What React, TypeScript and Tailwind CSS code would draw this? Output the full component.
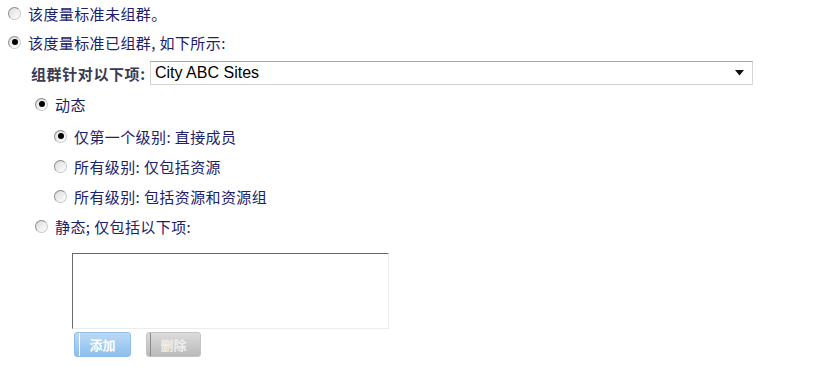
const font = "font-['Noto_Sans_CJK_SC','Liberation_Sans',sans-serif]";

function Radio({ checked }: { checked?: boolean }) {
  return (
    <span className="relative flex h-[13px] w-[13px] shrink-0 items-center justify-center rounded-full border border-[#c8c8c8] border-l-[#8c8c8c] border-t-[#8c8c8c] bg-gradient-to-br from-[#dcdcdc] to-white">
      {checked && <span className="h-[6px] w-[6px] rounded-full bg-black" />}
    </span>
  );
}

function Row({ checked, label, h, indent }: { checked?: boolean; label: string; h: string; indent: string }) {
  return (
    <div className={`flex items-center ${h} ${indent}`}>
      <Radio checked={checked} />
      <span className="ml-[7px] text-[15px] leading-none tracking-[0.4px] text-[#20206a]">{label}</span>
    </div>
  );
}

export default function App() {
  return (
    <div className={`h-[371px] w-[821px] bg-white ${font}`}>
      <div className="flex flex-col pl-[8px]">
        <Row label="该度量标准未组群。" h="h-[26px]" indent="" />
        <Row checked label="该度量标准已组群, 如下所示:" h="h-[32px]" indent="" />
        <div className="flex h-[30px] items-center pl-[23px]">
          <span className="w-[119px] text-[15px] font-bold leading-none tracking-[0.6px] text-[#3a3a50]">组群针对以下项:</span>
          <div className="flex h-[24px] w-[603px] items-center justify-between border border-[#d4d4d4] border-t-[#a8a8a8] bg-white pl-[4px] pr-[8px]">
            <span className="font-['Liberation_Sans',sans-serif] text-[16px] text-black">City ABC Sites</span>
            <svg width="9" height="6" viewBox="0 0 9 6">
              <path d="M0 0H9L4.5 5.5Z" fill="#111" />
            </svg>
          </div>
        </div>
        <Row checked label="动态" h="h-[32px]" indent="pl-[27px]" />
        <Row checked label="仅第一个级别: 直接成员" h="h-[32px]" indent="pl-[46px]" />
        <Row label="所有级别: 仅包括资源" h="h-[28px]" indent="pl-[46px]" />
        <Row label="所有级别: 包括资源和资源组" h="h-[32px]" indent="pl-[46px]" />
        <Row label="静态; 仅包括以下项:" h="h-[28px]" indent="pl-[27px]" />
        <div className="ml-[64px] mt-[13px] h-[76px] w-[317px] border border-[#ececec] border-l-[#6a6a6a] border-t-[#6a6a6a] bg-white" />
        <div className="ml-[66px] mt-[3px] flex gap-[15px]">
          <button className="relative flex h-[25px] w-[57px] items-center justify-center rounded-[3px] border border-[#8fbfe8] bg-gradient-to-b from-[#b9daf6] to-[#8bbfed] text-[13px] font-bold text-white">
            <span className="absolute left-[4px] top-0 h-full w-px bg-white" />
            添加
          </button>
          <button className="relative flex h-[25px] w-[55px] items-center justify-center rounded-[3px] border border-[#c4c4c4] bg-gradient-to-b from-[#dcdcdc] to-[#b9b9b9] text-[13px] font-bold text-[#eeeeee]">
            <span className="absolute left-[3px] top-0 h-full w-px bg-[#8a8a8a]" />
            删除
          </button>
        </div>
      </div>
    </div>
  );
}
